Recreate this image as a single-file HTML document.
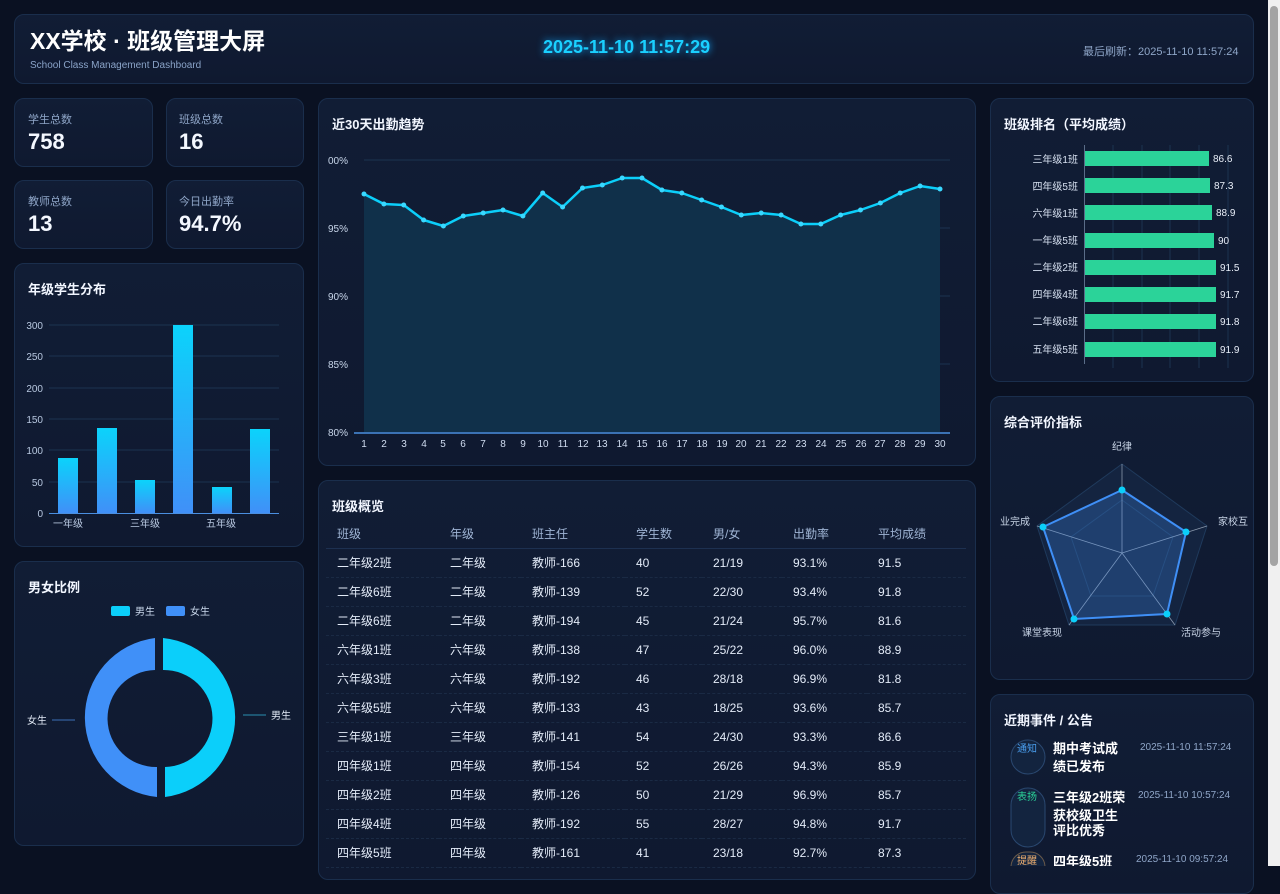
<!DOCTYPE html>
<html><head><meta charset="utf-8">
<style>
*{margin:0;padding:0;box-sizing:border-box}
html,body{width:1280px;height:866px;overflow:hidden;background:#0a1122;font-family:"Liberation Sans","Noto Sans CJK SC",sans-serif;color:#e6eefc}
.p{position:absolute;background:linear-gradient(180deg,#111d35,#0f1930);border:1px solid #1a2e4c;border-radius:10px}
.t{position:absolute;font-size:13px;font-weight:bold;color:#f2f6ff}
.a{position:absolute;white-space:nowrap}
.lab{font-size:11px;color:#8fa6c8}
.num{font-size:22px;font-weight:bold;color:#f4f8ff}
table{position:absolute;left:326px;top:520px;width:640px;border-collapse:collapse;font-size:12px}
td,th{height:29px;text-align:left;padding-left:11px;border-bottom:1px dashed #1a2a44;font-weight:normal;color:#e3ebf8}
th{color:#9fb4d4;border-bottom:1px solid #1d3050;height:28px}
.scroll{position:absolute;left:1268px;top:0;width:12px;height:866px;background:#f0f0f0}
.thumb{position:absolute;left:1270px;top:6px;width:8px;height:560px;background:#a4a4a4;border-radius:4px}
</style></head><body>
<div class="p" style="left:14px;top:14px;width:1240px;height:70px"></div>
<div class="a" style="left:30px;top:26px;font-size:23px;font-weight:bold;color:#fff;line-height:30px">XX学校 · 班级管理大屏</div>
<div class="a" style="left:30px;top:60px;font-size:10px;color:#8aa3c8">School Class Management Dashboard</div>
<div class="a" style="left:543px;top:37px;font-size:18px;font-weight:bold;color:#1ad0ff;text-shadow:0 0 8px #12a8ff">2025-11-10 11:57:29</div>
<div class="a" style="left:1083px;top:43px;font-size:11px;color:#8fa6c8">最后刷新：2025-11-10 11:57:24</div>

<div class="p" style="left:14px;top:98px;width:139px;height:69px"></div>
<div class="p" style="left:166px;top:98px;width:138px;height:69px"></div>
<div class="p" style="left:14px;top:180px;width:139px;height:69px"></div>
<div class="p" style="left:166px;top:180px;width:138px;height:69px"></div>
<div class="a lab" style="left:28px;top:111px">学生总数</div><div class="a num" style="left:28px;top:129px">758</div>
<div class="a lab" style="left:179px;top:111px">班级总数</div><div class="a num" style="left:179px;top:129px">16</div>
<div class="a lab" style="left:28px;top:193px">教师总数</div><div class="a num" style="left:28px;top:211px">13</div>
<div class="a lab" style="left:179px;top:193px">今日出勤率</div><div class="a num" style="left:179px;top:211px">94.7%</div>

<div class="p" style="left:14px;top:263px;width:290px;height:284px"></div>
<div class="t" style="left:28px;top:279px">年级学生分布</div>
<div class="p" style="left:14px;top:561px;width:290px;height:285px"></div>
<div class="t" style="left:28px;top:577px">男女比例</div>
<div class="p" style="left:318px;top:98px;width:658px;height:368px"></div>
<div class="t" style="left:332px;top:114px">近30天出勤趋势</div>
<div class="p" style="left:318px;top:480px;width:658px;height:400px"></div>
<div class="t" style="left:332px;top:496px">班级概览</div>
<div class="p" style="left:990px;top:98px;width:264px;height:284px"></div>
<div class="t" style="left:1004px;top:114px">班级排名（平均成绩）</div>
<div class="p" style="left:990px;top:396px;width:264px;height:284px"></div>
<div class="t" style="left:1004px;top:412px">综合评价指标</div>
<div class="p" style="left:990px;top:694px;width:264px;height:200px"></div>
<div class="t" style="left:1004px;top:710px">近期事件 / 公告</div>

<table>
<tr><th>班级</th><th>年级</th><th>班主任</th><th>学生数</th><th>男/女</th><th>出勤率</th><th>平均成绩</th></tr>
<tr><td style="width:113px">二年级2班</td><td style="width:82px">二年级</td><td style="width:104px">教师-166</td><td style="width:77px">40</td><td style="width:80px">21/19</td><td style="width:85px">93.1%</td><td>91.5</td></tr>
<tr><td>二年级6班</td><td>二年级</td><td>教师-139</td><td>52</td><td>22/30</td><td>93.4%</td><td>91.8</td></tr>
<tr><td>二年级6班</td><td>二年级</td><td>教师-194</td><td>45</td><td>21/24</td><td>95.7%</td><td>81.6</td></tr>
<tr><td>六年级1班</td><td>六年级</td><td>教师-138</td><td>47</td><td>25/22</td><td>96.0%</td><td>88.9</td></tr>
<tr><td>六年级3班</td><td>六年级</td><td>教师-192</td><td>46</td><td>28/18</td><td>96.9%</td><td>81.8</td></tr>
<tr><td>六年级5班</td><td>六年级</td><td>教师-133</td><td>43</td><td>18/25</td><td>93.6%</td><td>85.7</td></tr>
<tr><td>三年级1班</td><td>三年级</td><td>教师-141</td><td>54</td><td>24/30</td><td>93.3%</td><td>86.6</td></tr>
<tr><td>四年级1班</td><td>四年级</td><td>教师-154</td><td>52</td><td>26/26</td><td>94.3%</td><td>85.9</td></tr>
<tr><td>四年级2班</td><td>四年级</td><td>教师-126</td><td>50</td><td>21/29</td><td>96.9%</td><td>85.7</td></tr>
<tr><td>四年级4班</td><td>四年级</td><td>教师-192</td><td>55</td><td>28/27</td><td>94.8%</td><td>91.7</td></tr>
<tr><td>四年级5班</td><td>四年级</td><td>教师-161</td><td>41</td><td>23/18</td><td>92.7%</td><td>87.3</td></tr>
</table>

<svg class="a" style="left:0;top:0" width="1280" height="866" font-family="Liberation Sans,Noto Sans CJK SC,sans-serif">
<defs>
<linearGradient id="bg" x1="0" y1="0" x2="0" y2="1"><stop offset="0" stop-color="#0bd3fb"/><stop offset="1" stop-color="#4090f8"/></linearGradient>
</defs>
<g stroke="#1b3350" stroke-width="1">
<line x1="49" y1="325" x2="279" y2="325"/><line x1="49" y1="356" x2="279" y2="356"/><line x1="49" y1="388" x2="279" y2="388"/><line x1="49" y1="419" x2="279" y2="419"/><line x1="49" y1="450" x2="279" y2="450"/><line x1="49" y1="482" x2="279" y2="482"/>
</g>
<g font-size="10" fill="#b8c8e0" text-anchor="end">
<text x="43" y="329">300</text><text x="43" y="360">250</text><text x="43" y="392">200</text><text x="43" y="423">150</text><text x="43" y="454">100</text><text x="43" y="486">50</text><text x="43" y="517">0</text></g>
<g fill="url(#bg)"><rect x="58" y="458" width="20" height="55"/><rect x="97" y="428" width="20" height="85"/><rect x="135" y="480" width="20" height="33"/><rect x="173" y="325" width="20" height="188"/><rect x="212" y="487" width="20" height="26"/><rect x="250" y="429" width="20" height="84"/></g>
<line x1="49" y1="513.5" x2="279" y2="513.5" stroke="#4a8fe0"/>
<g font-size="10" fill="#b8c8e0"><text x="53" y="527">一年级</text><text x="130" y="527">三年级</text><text x="206" y="527">五年级</text></g>
<rect x="111" y="606" width="19" height="10" rx="2" fill="#0bcffa"/><text x="135" y="615" font-size="10" fill="#c8d6ea">男生</text>
<rect x="166" y="606" width="19" height="10" rx="2" fill="#4090f8"/><text x="190" y="615" font-size="10" fill="#c8d6ea">女生</text>
<path d="M163 638 A80 80 0 0 1 165 797 L165 767 A48 48 0 0 0 163 670 Z" fill="#0bcffa"/>
<path d="M157 797 A80 80 0 0 1 155 638 L155 670 A48 48 0 0 0 157 767 Z" fill="#4090f8"/>
<line x1="243" y1="715" x2="266" y2="715" stroke="#2a8fb0"/><text x="271" y="719" font-size="10" fill="#e0e8f4">男生</text>
<line x1="52" y1="720" x2="75" y2="720" stroke="#3b6fb5"/><text x="27" y="724" font-size="10" fill="#e0e8f4">女生</text>
<g stroke="#1b3350"><line x1="364" y1="160" x2="950" y2="160"/><line x1="364" y1="228" x2="950" y2="228"/><line x1="364" y1="296" x2="950" y2="296"/><line x1="364" y1="364" x2="950" y2="364"/></g>
<g font-size="10" fill="#c8d6ea"><text x="328" y="164">00%</text><text x="328" y="232">95%</text><text x="328" y="300">90%</text><text x="328" y="368">85%</text><text x="328" y="436">80%</text></g>
<polygon fill="#10304a" points="364,432 364,194 383.9,204 403.7,205 423.6,220 443.4,226 463.3,216 483.2,213 503,210 522.9,216 542.7,193 562.6,207 582.5,188 602.3,185 622.2,178 642,178 661.9,190 681.8,193 701.6,200 721.5,207 741.3,215 761.2,213 781.1,215 800.9,224 820.8,224 840.6,215 860.5,210 880.4,203 900.2,193 920.1,186 940,189 940,432"/>
<polyline fill="none" stroke="#0bcffa" stroke-width="2.5" stroke-linejoin="round" points="364,194 383.9,204 403.7,205 423.6,220 443.4,226 463.3,216 483.2,213 503,210 522.9,216 542.7,193 562.6,207 582.5,188 602.3,185 622.2,178 642,178 661.9,190 681.8,193 701.6,200 721.5,207 741.3,215 761.2,213 781.1,215 800.9,224 820.8,224 840.6,215 860.5,210 880.4,203 900.2,193 920.1,186 940,189"/>
<g fill="#3ad8ff"><circle cx="364" cy="194" r="2.5"/><circle cx="383.9" cy="204" r="2.5"/><circle cx="403.7" cy="205" r="2.5"/><circle cx="423.6" cy="220" r="2.5"/><circle cx="443.4" cy="226" r="2.5"/><circle cx="463.3" cy="216" r="2.5"/><circle cx="483.2" cy="213" r="2.5"/><circle cx="503" cy="210" r="2.5"/><circle cx="522.9" cy="216" r="2.5"/><circle cx="542.7" cy="193" r="2.5"/><circle cx="562.6" cy="207" r="2.5"/><circle cx="582.5" cy="188" r="2.5"/><circle cx="602.3" cy="185" r="2.5"/><circle cx="622.2" cy="178" r="2.5"/><circle cx="642" cy="178" r="2.5"/><circle cx="661.9" cy="190" r="2.5"/><circle cx="681.8" cy="193" r="2.5"/><circle cx="701.6" cy="200" r="2.5"/><circle cx="721.5" cy="207" r="2.5"/><circle cx="741.3" cy="215" r="2.5"/><circle cx="761.2" cy="213" r="2.5"/><circle cx="781.1" cy="215" r="2.5"/><circle cx="800.9" cy="224" r="2.5"/><circle cx="820.8" cy="224" r="2.5"/><circle cx="840.6" cy="215" r="2.5"/><circle cx="860.5" cy="210" r="2.5"/><circle cx="880.4" cy="203" r="2.5"/><circle cx="900.2" cy="193" r="2.5"/><circle cx="920.1" cy="186" r="2.5"/><circle cx="940" cy="189" r="2.5"/></g>
<line x1="354" y1="433" x2="950" y2="433" stroke="#4a8fe0" stroke-width="1.5"/>
<g font-size="10" fill="#d0dcf0" text-anchor="middle"><text x="364" y="447">1</text><text x="384" y="447">2</text><text x="404" y="447">3</text><text x="424" y="447">4</text><text x="443" y="447">5</text><text x="463" y="447">6</text><text x="483" y="447">7</text><text x="503" y="447">8</text><text x="523" y="447">9</text><text x="543" y="447">10</text><text x="563" y="447">11</text><text x="583" y="447">12</text><text x="602" y="447">13</text><text x="622" y="447">14</text><text x="642" y="447">15</text><text x="662" y="447">16</text><text x="682" y="447">17</text><text x="702" y="447">18</text><text x="722" y="447">19</text><text x="741" y="447">20</text><text x="761" y="447">21</text><text x="781" y="447">22</text><text x="801" y="447">23</text><text x="821" y="447">24</text><text x="841" y="447">25</text><text x="861" y="447">26</text><text x="880" y="447">27</text><text x="900" y="447">28</text><text x="920" y="447">29</text><text x="940" y="447">30</text></g>
<g stroke="#1b3350"><line x1="1113" y1="145" x2="1113" y2="368"/><line x1="1142" y1="145" x2="1142" y2="368"/><line x1="1170" y1="145" x2="1170" y2="368"/><line x1="1199" y1="145" x2="1199" y2="368"/><line x1="1228" y1="145" x2="1228" y2="368"/></g>
<line x1="1084.5" y1="145" x2="1084.5" y2="364" stroke="#5a6d88"/>
<g fill="#2bd399"><rect x="1085" y="151" width="124" height="15"/><rect x="1085" y="178" width="125" height="15"/><rect x="1085" y="205" width="127" height="15"/><rect x="1085" y="233" width="129" height="15"/><rect x="1085" y="260" width="131" height="15"/><rect x="1085" y="287" width="131" height="15"/><rect x="1085" y="314" width="131" height="15"/><rect x="1085" y="342" width="131" height="15"/></g>
<g font-size="10" fill="#d6e0f0" text-anchor="end"><text x="1078" y="163">三年级1班</text><text x="1078" y="190">四年级5班</text><text x="1078" y="217">六年级1班</text><text x="1078" y="244">一年级5班</text><text x="1078" y="271">二年级2班</text><text x="1078" y="298">四年级4班</text><text x="1078" y="325">二年级6班</text><text x="1078" y="353">五年级5班</text></g>
<g font-size="10" fill="#e8eef8"><text x="1213" y="162">86.6</text><text x="1214" y="189">87.3</text><text x="1216" y="216">88.9</text><text x="1218" y="244">90</text><text x="1220" y="271">91.5</text><text x="1220" y="298">91.7</text><text x="1220" y="325">91.8</text><text x="1220" y="353">91.9</text></g>
<polygon points="1122,464 1207,526 1175,625 1069,625 1037,526" fill="#142440" stroke="#1f3a5c"/>
<polygon points="1122,500 1173,537 1153,596 1091,596 1071,537" fill="none" stroke="#1f3a5c"/>
<g stroke="#8896aa" stroke-width="0.8"><line x1="1122" y1="553" x2="1122" y2="464"/><line x1="1122" y1="553" x2="1207" y2="526"/><line x1="1122" y1="553" x2="1175" y2="625"/><line x1="1122" y1="553" x2="1069" y2="625"/><line x1="1122" y1="553" x2="1037" y2="526"/></g>
<polygon points="1122,490 1186,532 1167,614 1074,619 1043,527" fill="rgba(64,144,248,0.25)" stroke="#3f8ff6" stroke-width="2"/>
<g fill="#0bcffa"><circle cx="1122" cy="490" r="3.5"/><circle cx="1186" cy="532" r="3.5"/><circle cx="1167" cy="614" r="3.5"/><circle cx="1074" cy="619" r="3.5"/><circle cx="1043" cy="527" r="3.5"/></g>
<g font-size="10" fill="#c8d4e6"><text x="1112" y="450">纪律</text><text x="1218" y="525">家校互</text><text x="1181" y="636">活动参与</text><text x="1022" y="636">课堂表现</text><text x="1000" y="525">业完成</text></g>
<rect x="1011" y="740" width="34" height="34" rx="17" fill="#13243f" stroke="#2a4870"/>
<text x="1017" y="752" font-size="10" fill="#4a9ff0">通知</text>
<rect x="1011" y="788" width="34" height="59" rx="17" fill="#13243f" stroke="#2a4870"/>
<text x="1017" y="800" font-size="10" fill="#2bd399">表扬</text>
<rect x="1011" y="852" width="34" height="30" rx="15" fill="#13243f" stroke="#6a5a4a"/>
<text x="1017" y="864" font-size="10" fill="#f0b070">提醒</text>
<g font-size="13" font-weight="bold" fill="#fff"><text x="1053" y="753">期中考试成</text><text x="1053" y="771">绩已发布</text><text x="1053" y="802">三年级2班荣</text><text x="1053" y="820">获校级卫生</text><text x="1053" y="835">评比优秀</text><text x="1053" y="866">四年级5班</text></g>
<g font-size="10" fill="#8fa6c8"><text x="1140" y="750">2025-11-10 11:57:24</text><text x="1138" y="798">2025-11-10 10:57:24</text><text x="1136" y="862">2025-11-10 09:57:24</text></g>
</svg>
<div class="scroll"></div><div class="thumb"></div>
</body></html>
